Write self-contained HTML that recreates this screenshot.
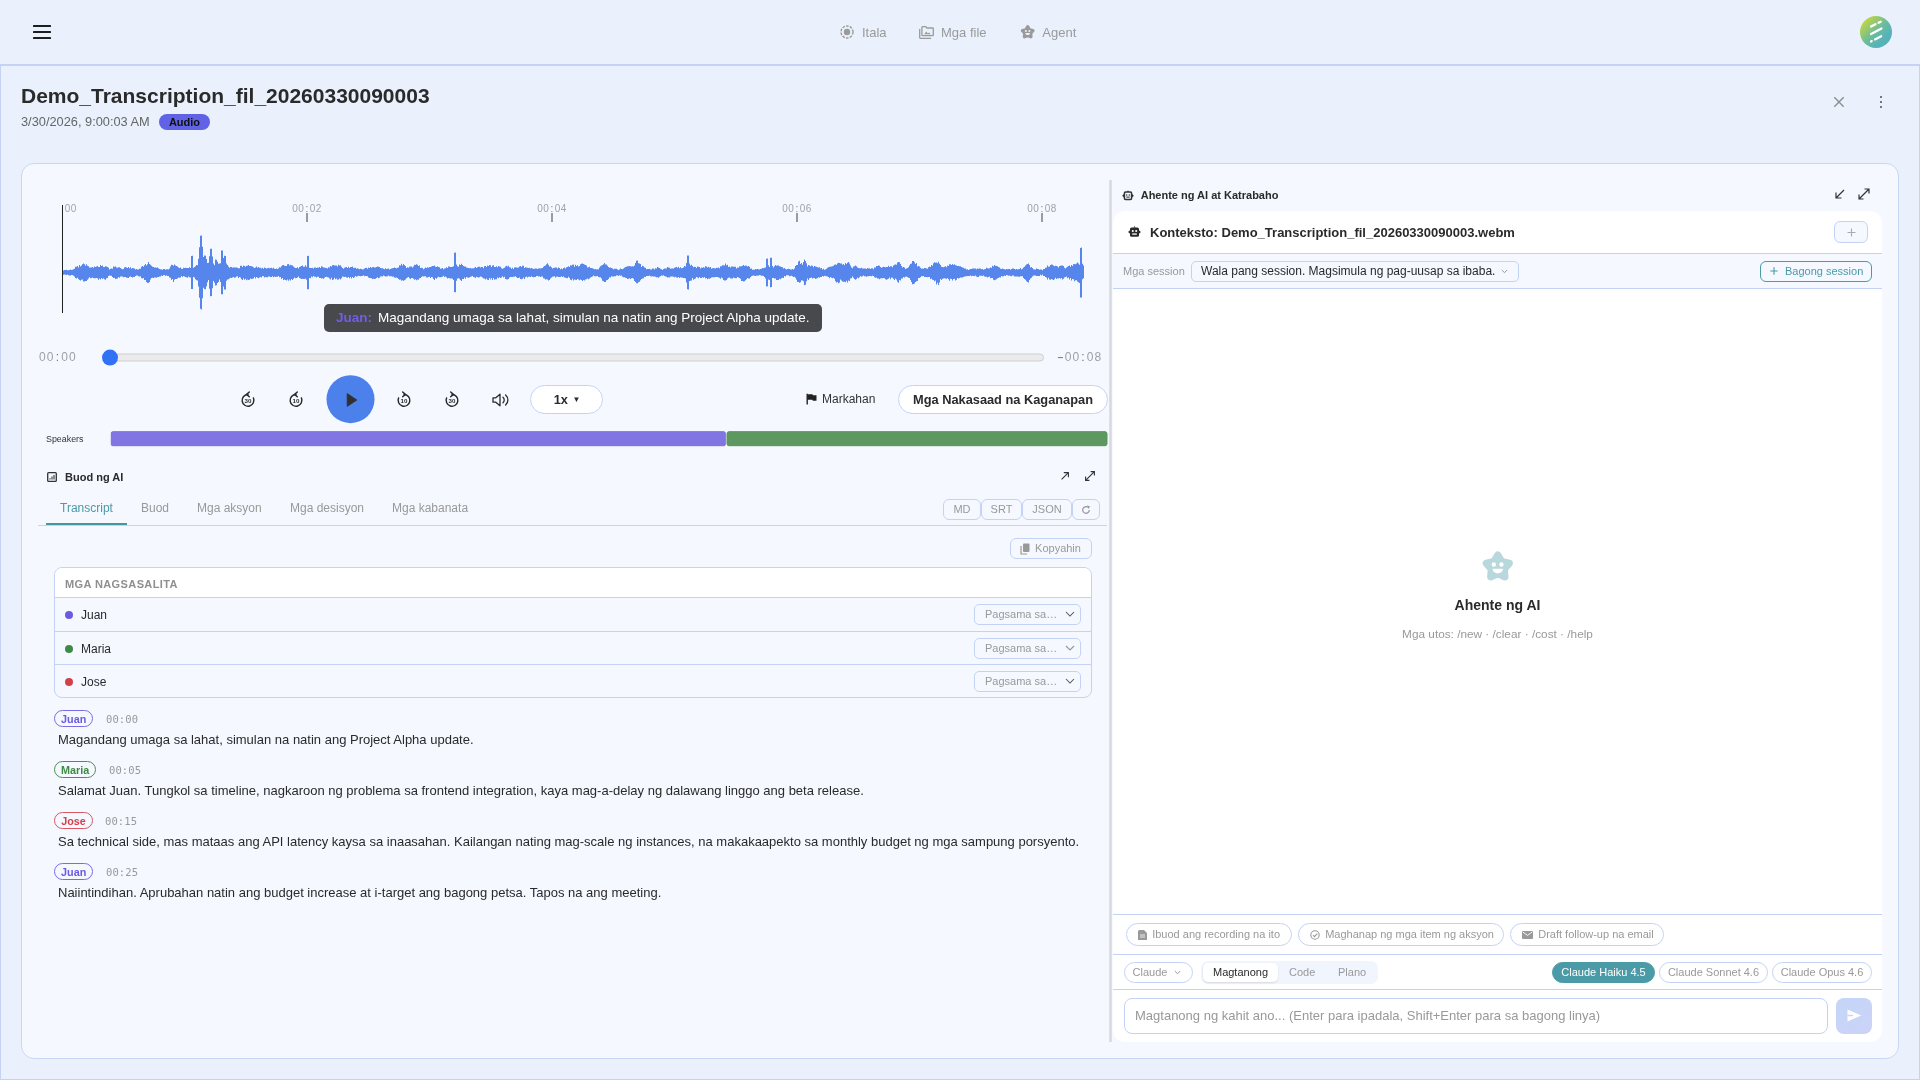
<!DOCTYPE html>
<html lang="fil">
<head>
<meta charset="utf-8">
<title>Demo_Transcription_fil_20260330090003</title>
<style>
*{box-sizing:border-box;margin:0;padding:0}
html,body{width:1920px;height:1080px;overflow:hidden}
body{background:#eaf1fd;font-family:"Liberation Sans",Arial,sans-serif;color:#2a2a2a;position:relative;font-size:13px}
.abs{position:absolute}
#root{position:absolute;left:0;top:0;width:1920px;height:1080px;will-change:transform}
svg{display:block}
/* top bar */
#topbar{position:absolute;left:0;top:0;width:1920px;height:66px;border-bottom:2px solid #c4d3f3;background:#eaf1fd}
#burger{position:absolute;left:33px;top:25px;width:18px;height:14px}
#burger i{position:absolute;left:0;width:18px;height:2px;background:#1e1e1e;border-radius:.5px}
.nav{position:absolute;top:22px;height:20px;display:flex;align-items:center;color:#9a9a9a;font-size:13px;white-space:nowrap}
.nav svg{margin-right:8px}
#avatar{position:absolute;left:1860px;top:16px;width:32px;height:32px;border-radius:50%;background:linear-gradient(135deg,#d8e024 4%,#a3cd60 26%,#6cbc9c 50%,#57b3b6 72%,#4fafc2 100%)}
/* page */
#page{position:absolute;left:0;top:66px;width:1920px;height:1014px;border:1px solid #c4d3f3;border-top:none;background:#eaf1fd}
#title{position:absolute;left:21px;top:82px;font-size:21px;font-weight:700;line-height:28px;color:#2a2a2a;white-space:nowrap}
#sub{position:absolute;left:21px;top:113px;font-size:12.8px;line-height:18px;color:#666;white-space:nowrap}
#badge{position:absolute;left:159px;top:114px;width:51px;height:16px;border-radius:8px;background:#6163e6;color:#111;font-size:11px;font-weight:700;line-height:16px;text-align:center}
/* card */
#card{position:absolute;left:21px;top:163px;width:1878px;height:896px;border:1px solid #c9d7f6;border-radius:13px;background:#f5f8ff}
#split{position:absolute;left:1109px;top:180px;width:3px;height:862px;background:linear-gradient(90deg,#e2e4ea,#d6d8de 50%,#e2e4ea)}
.mono{font-family:"Liberation Mono","DejaVu Sans Mono",monospace}
.tick{position:absolute;top:213px;width:2px;height:9px;background:#9a9aa0}
.tl{position:absolute;top:203px;width:60px;text-align:center;font-size:10px;line-height:12px;color:#a2a2a8;letter-spacing:.44px;white-space:nowrap}
.tl i{display:inline-block;width:5.56px;text-align:center;font-style:normal;color:#88888e}
#cursor{position:absolute;left:62px;top:205px;width:1px;height:108px;background:#222}
#caption{position:absolute;left:324px;top:304px;width:498px;height:28px;border-radius:5px;background:#47494c;color:#fff;font-size:13.500px;line-height:27px;padding-left:12px;white-space:nowrap}
#caption b{color:#6f5fe6;margin-right:6px}
.tm{position:absolute;top:350px;font-size:12px;line-height:14px;color:#a0a0a4;letter-spacing:1.080px;white-space:nowrap}
.tm i{display:inline-block;width:6.670px;text-align:center;font-style:normal;color:#77777c}
#track{position:absolute;left:103px;top:353px;width:941px;height:8px;transform:translateY(.5px);border:1px solid #cfcfcf;border-radius:4px;background:#ebebeb}
#thumb{position:absolute;left:102px;top:349px;width:16px;height:16px;border-radius:50%;background:#3172f4;transform:translateY(.6px)}
#play{position:absolute;left:326px;top:375px;width:48px;height:48px;border-radius:50%;background:#4c80ea;transform:translate(.5px,.2px)}
.ic{position:absolute}
.pill{position:absolute;top:385px;height:29px;border:1px solid #c4d3f5;border-radius:15px;background:#fff;font-weight:700;font-size:12.800px;line-height:27px;color:#2a2a2a;text-align:center;white-space:nowrap}
#mark{position:absolute;left:806px;top:391px;font-size:12px;line-height:16px;color:#333;white-space:nowrap;display:flex;align-items:center}
#spk-label{position:absolute;left:46px;top:433px;font-size:8.900px;line-height:13px;color:#333}
#spk1{position:absolute;left:111px;top:431px;width:615px;height:14.600px;background:#8075e3;border:1px solid #7a6ee1;border-radius:2px;transform:translate(-.2px,.2px)}
#spk2{position:absolute;left:726px;top:431px;width:381px;height:14.600px;background:#5e9861;border:1px solid #57935b;border-radius:2.500px;transform:translate(.5px,.2px)}
.h{position:absolute;font-weight:700;color:#2a2a2a;white-space:nowrap}
.tab{position:absolute;top:500px;font-size:12px;line-height:16px;color:#999;white-space:nowrap}
#tabline{position:absolute;left:38px;top:525px;width:1069px;height:1px;background:#c4d3f5}
#tabact{position:absolute;left:46px;top:523px;width:81px;height:2px;background:#46989f}
.sbtn{position:absolute;height:21px;border:1px solid #c4d3f5;border-radius:6px;background:#f5f8ff;color:#999;font-size:11px;line-height:19px;text-align:center;white-space:nowrap}
#spk-table{position:absolute;left:54px;top:567px;width:1038px;height:131px;border:1px solid #c4d3f5;border-radius:8px;overflow:hidden;background:#f5f8ff}
#spk-table .hd{height:30px;background:#fff;border-bottom:1px solid #c4d3f5;font-size:11px;font-weight:700;color:#8f8f8f;letter-spacing:.4px;line-height:32px;padding-left:10px}
#spk-table .row{height:33.5px;border-bottom:1px solid #c4d3f5;position:relative;font-size:12.5px;line-height:33px;color:#2a2a2a}
#spk-table .row:last-child{border-bottom:none}
.dot{position:absolute;left:10px;top:13px;width:8px;height:8px;border-radius:50%}
.nm{position:absolute;left:26px;top:1px;font-size:12px}
.sel{position:absolute;left:919px;top:6px;width:107px;height:21px;border:1px solid #c4d3f5;border-radius:5px;background:#f5f8ff;color:#999;font-size:11px;line-height:19px;padding-left:10px}
.sel svg{position:absolute;right:5px;top:6px}
.chip{position:absolute;left:54px;height:16.500px;border:1.200px solid;border-radius:9px;font-size:10.800px;font-weight:700;line-height:16.600px;text-align:center;margin-top:-.6px}
.ts{position:absolute;font-family:"DejaVu Sans Mono","Liberation Mono",monospace;font-size:10.5px;line-height:14px;color:#999;letter-spacing:0.1px}
.tx{position:absolute;left:58px;font-size:13px;line-height:16px;color:#2a2a2a;white-space:nowrap}
/* right */
#agent{position:absolute;left:1113px;top:211px;width:769px;height:831px;border-radius:12px;background:#fff;overflow:hidden}
.hl{position:absolute;left:0;width:769px;height:1px;background:#c4d3f5}
.rc{position:absolute;height:23px;border:1px solid #c4d3f5;border-radius:12px;background:#fff;color:#999;font-size:11px;line-height:21px;white-space:nowrap;display:flex;align-items:center;padding-left:11.200px}
.rc svg{margin-right:5px}
.mp{position:absolute;top:751px;height:21px;border:1px solid #c4d3f5;border-radius:11px;background:#fff;color:#999;font-size:11px;line-height:19px;text-align:center;white-space:nowrap}
</style>
</head>
<body>
<div id="root">
<div id="topbar">
  <div id="burger"><i style="top:0"></i><i style="top:6px"></i><i style="top:12px"></i></div>
  <div class="nav" style="left:840px">
    <svg width="14" height="14" viewBox="0 0 14 14"><circle cx="7" cy="7" r="6" fill="none" stroke="#9a9a9a" stroke-width="1.4" stroke-dasharray="2.6 1.2"/><circle cx="7" cy="7" r="3.2" fill="#9a9a9a"/></svg>Itala</div>
  <div class="nav" style="left:919px">
    <svg width="15" height="13" viewBox="0 0 15 13" style="margin-right:7px"><path d="M3.600 .7h3.200l1.100 1.300h5.700a.7.7 0 0 1 .7.7v6.200a.7.7 0 0 1-.7.7h-10a.7.7 0 0 1-.7-.7v-7.500a.7.7 0 0 1 .7-.7z" fill="none" stroke="#9a9a9a" stroke-width="1.300" stroke-linejoin="round"/><path d="M.7 3.400v8.200a.7.7 0 0 0 .7.7h10.200" fill="none" stroke="#9a9a9a" stroke-width="1.300" stroke-linecap="round"/><path d="M5.300 8.300l2-2.700 1.500 1.900 1.100-1.100 2 1.900z" fill="#9a9a9a"/></svg>Mga file</div>
  <div class="nav" style="left:1021px">
    <svg style="position:absolute;left:-.6px;top:2.400px" width="15.400" height="15.400" viewBox="0 0 24 24"><path d="M12.00 4.30L14.82 9.02L20.18 10.24L16.57 14.38L17.05 19.86L12.00 17.70L6.95 19.86L7.43 14.38L3.82 10.24L9.18 9.02Z" fill="#9a9a9a" stroke="#9a9a9a" stroke-width="5.200" stroke-linejoin="round"/><circle cx="9.150" cy="11.100" r="1.550" fill="#eaf1fd"/><circle cx="14.600" cy="11.100" r="1.550" fill="#eaf1fd"/><path d="M8.300 14.050h7.400c0 2-1.700 3.200-3.700 3.200s-3.700-1.200-3.700-3.200z" fill="#eaf1fd"/></svg><span style="margin-left:21.300px">Agent</span></div>
  <div id="avatar"><svg width="32" height="32" viewBox="0 0 32 32"><g stroke="#fff" stroke-width="2.200" stroke-linecap="round"><path d="M11 10.500l4.500-2.300"/><path d="M18.500 6.800l2.200-1.100"/><path d="M11 18l10.500-5.500"/><path d="M11 25.500l.8-.4"/><path d="M15 23.400l6.200-3.200"/></g></svg></div>
</div>
<div id="page"></div>
<div id="title">Demo_Transcription_fil_20260330090003</div>
<div id="sub">3/30/2026, 9:00:03 AM</div>
<div id="badge">Audio</div>
<svg class="abs" style="left:1833px;top:96px" width="12" height="12" viewBox="0 0 12 12"><path d="M1.300 1.300l9.400 9.400M10.700 1.300l-9.400 9.400" stroke="#8d8d8d" stroke-width="1.400" fill="none"/></svg>
<svg class="abs" style="left:1879px;top:95px" width="4" height="14" viewBox="0 0 4 14"><circle cx="2" cy="2" r=".95" fill="#444"/><circle cx="2" cy="7" r=".95" fill="#444"/><circle cx="2" cy="12" r=".95" fill="#444"/></svg>

<div id="card"></div>
<div id="split"></div>

<!-- waveform -->
<div class="tl" style="left:32px;width:60px;clip-path:inset(0 0 0 31px)">00<i>:</i>00</div>
<div class="tl" style="left:277px">00<i>:</i>02</div>
<div class="tl" style="left:522px">00<i>:</i>04</div>
<div class="tl" style="left:767px">00<i>:</i>06</div>
<div class="tl" style="left:1012px">00<i>:</i>08</div>
<div class="tick" style="left:306px"></div><div class="tick" style="left:551px"></div><div class="tick" style="left:796px"></div><div class="tick" style="left:1041px"></div>
<svg class="abs" style="left:62px;top:225px" width="1022" height="95" viewBox="0 0 1022 95"><path fill="#5686eb" d="M0,44.9H1V45.5H2V45.0H3V44.9H4V44.7H5V45.3H6V45.3H7V44.9H8V44.4H9V44.9H10V44.7H11V44.3H12V43.7H13V41.8H14V41.8H15V41.0H16V42.4H17V40.0H18V41.5H19V40.6H20V39.2H21V38.4H22V39.2H23V40.7H24V39.3H25V40.8H26V41.3H27V42.4H28V42.6H29V42.4H30V41.9H31V42.8H32V41.6H33V42.1H34V41.5H35V40.9H36V42.1H37V42.0H38V40.0H39V41.0H40V40.5H41V41.9H42V42.1H43V41.2H44V41.4H45V41.9H46V42.8H47V44.6H48V43.8H49V43.4H50V43.8H51V41.5H52V41.7H53V41.6H54V42.6H55V42.8H56V42.2H57V42.2H58V43.0H59V43.8H60V44.2H61V44.1H62V42.5H63V42.1H64V42.4H65V42.9H66V42.0H67V43.2H68V42.3H69V43.8H70V43.1H71V43.2H72V43.6H73V44.6H74V44.1H75V44.4H76V44.4H77V43.7H78V43.8H79V41.7H80V40.9H81V41.8H82V40.3H83V38.9H84V40.5H85V39.3H86V36.9H87V39.1H88V39.7H89V40.8H90V41.7H91V42.0H92V42.5H93V42.4H94V42.8H95V42.5H96V43.3H97V44.0H98V44.3H99V44.4H100V44.7H101V44.0H102V44.0H103V44.8H104V44.2H105V44.2H106V44.5H107V43.5H108V41.6H109V39.8H110V40.1H111V40.7H112V39.4H113V40.6H114V41.0H115V41.6H116V42.6H117V42.9H118V42.6H119V43.8H120V44.1H121V42.7H122V43.0H123V42.7H124V42.9H125V42.9H126V43.1H127V42.3H128V43.1H129V30.9H130V30.7H131V43.1H132V42.1H133V41.3H134V40.0H135V40.2H136V33.8H137V22.2H138V10.7H139V10.6H140V21.7H141V32.1H142V30.6H143V30.8H144V33.9H145V37.9H146V37.7H147V31.2H148V23.7H149V23.8H150V31.5H151V38.6H152V40.3H153V34.6H154V34.8H155V36.7H156V38.7H157V38.5H158V38.2H159V25.5H160V25.5H161V33.1H162V30.7H163V31.0H164V38.5H165V39.9H166V41.6H167V42.8H168V42.0H169V42.0H170V42.7H171V42.2H172V42.5H173V42.6H174V42.5H175V42.8H176V43.2H177V43.2H178V40.7H179V40.7H180V41.9H181V40.5H182V40.9H183V41.8H184V40.7H185V40.8H186V40.1H187V40.9H188V41.0H189V41.2H190V41.6H191V42.2H192V43.0H193V42.4H194V41.4H195V42.7H196V41.9H197V42.8H198V42.8H199V43.4H200V42.7H201V43.8H202V42.6H203V42.9H204V43.4H205V43.3H206V42.8H207V43.3H208V43.0H209V42.7H210V43.5H211V42.7H212V43.8H213V43.9H214V43.4H215V44.0H216V43.4H217V42.3H218V42.5H219V41.2H220V40.3H221V40.0H222V40.7H223V40.9H224V41.1H225V39.3H226V39.0H227V40.6H228V39.7H229V40.2H230V40.5H231V41.6H232V42.5H233V42.9H234V43.0H235V42.3H236V43.5H237V41.9H238V41.6H239V41.1H240V40.4H241V41.7H242V41.8H243V40.2H244V41.8H245V31.0H246V30.7H247V42.8H248V43.0H249V43.1H250V42.8H251V43.6H252V42.5H253V42.4H254V43.1H255V42.4H256V42.7H257V42.0H258V42.9H259V41.3H260V41.8H261V42.5H262V42.6H263V43.0H264V43.1H265V43.4H266V42.3H267V42.5H268V41.1H269V41.5H270V40.3H271V40.0H272V40.5H273V40.5H274V40.5H275V41.6H276V39.8H277V40.6H278V40.3H279V41.8H280V42.9H281V43.7H282V42.8H283V42.3H284V42.1H285V42.9H286V41.8H287V43.0H288V42.1H289V42.0H290V41.5H291V42.9H292V42.7H293V42.8H294V43.7H295V43.3H296V43.7H297V44.3H298V43.8H299V43.9H300V44.6H301V44.2H302V43.5H303V43.1H304V42.8H305V43.8H306V42.4H307V42.9H308V41.9H309V42.7H310V42.3H311V42.1H312V42.6H313V42.5H314V41.9H315V41.4H316V41.7H317V41.9H318V43.0H319V43.3H320V43.3H321V43.7H322V44.2H323V43.3H324V44.0H325V43.8H326V43.4H327V44.4H328V44.1H329V43.6H330V43.2H331V43.0H332V42.5H333V43.0H334V43.3H335V42.7H336V42.5H337V40.2H338V40.5H339V38.8H340V40.5H341V39.0H342V39.9H343V41.1H344V42.9H345V42.3H346V42.8H347V41.8H348V41.6H349V41.4H350V42.6H351V41.4H352V39.8H353V40.0H354V39.3H355V39.7H356V41.0H357V40.4H358V43.0H359V42.7H360V43.0H361V44.3H362V43.6H363V42.5H364V43.0H365V42.3H366V42.8H367V42.0H368V41.9H369V41.5H370V41.1H371V41.0H372V40.6H373V41.8H374V41.9H375V41.2H376V42.0H377V42.3H378V43.7H379V43.5H380V43.1H381V44.3H382V43.5H383V43.2H384V42.3H385V42.9H386V41.6H387V41.4H388V42.1H389V42.0H390V41.7H391V41.2H392V27.7H393V27.5H394V39.5H395V41.3H396V41.7H397V39.6H398V40.0H399V38.8H400V40.0H401V41.0H402V41.5H403V41.6H404V42.6H405V42.8H406V43.1H407V43.2H408V43.0H409V43.6H410V43.2H411V43.4H412V42.7H413V42.1H414V43.0H415V42.2H416V41.7H417V41.8H418V42.6H419V42.1H420V42.0H421V43.2H422V41.3H423V40.9H424V41.9H425V40.4H426V41.0H427V39.9H428V40.2H429V41.9H430V40.6H431V40.3H432V42.0H433V42.0H434V41.2H435V42.3H436V41.0H437V41.4H438V41.8H439V43.3H440V43.8H441V43.3H442V42.7H443V41.6H444V40.7H445V41.6H446V40.8H447V42.3H448V42.4H449V43.7H450V42.8H451V43.9H452V42.6H453V42.3H454V42.6H455V42.7H456V42.6H457V41.5H458V40.9H459V41.9H460V40.7H461V40.8H462V43.0H463V42.2H464V42.4H465V42.8H466V43.0H467V42.8H468V43.6H469V43.1H470V43.4H471V44.0H472V43.8H473V43.6H474V43.5H475V44.1H476V43.4H477V43.3H478V43.5H479V43.3H480V42.9H481V41.8H482V40.9H483V40.5H484V39.2H485V38.2H486V39.7H487V41.5H488V41.2H489V42.2H490V43.5H491V43.0H492V42.7H493V42.6H494V42.4H495V43.5H496V42.6H497V43.1H498V44.2H499V43.4H500V44.2H501V43.0H502V42.4H503V43.5H504V42.3H505V42.1H506V41.3H507V42.1H508V40.3H509V40.4H510V39.8H511V39.6H512V41.7H513V39.7H514V41.1H515V40.2H516V41.4H517V41.1H518V39.2H519V38.8H520V38.6H521V39.1H522V39.5H523V40.0H524V40.4H525V42.4H526V42.3H527V41.8H528V43.1H529V43.1H530V43.3H531V43.7H532V44.3H533V43.9H534V44.6H535V44.2H536V44.2H537V42.6H538V41.3H539V40.5H540V40.1H541V39.2H542V37.9H543V39.4H544V39.5H545V40.8H546V42.0H547V42.8H548V42.4H549V43.1H550V43.5H551V44.3H552V43.7H553V43.8H554V43.8H555V44.4H556V44.9H557V44.4H558V43.6H559V44.1H560V44.2H561V43.5H562V42.8H563V41.9H564V41.7H565V41.2H566V41.2H567V40.9H568V41.2H569V41.6H570V41.2H571V41.5H572V40.4H573V38.1H574V35.8H575V35.6H576V38.2H577V38.5H578V39.1H579V41.9H580V40.8H581V41.2H582V42.5H583V42.7H584V44.2H585V44.0H586V43.9H587V43.7H588V44.5H589V44.5H590V43.5H591V43.6H592V44.6H593V43.3H594V43.5H595V42.0H596V42.4H597V43.1H598V43.7H599V44.2H600V45.0H601V44.0H602V43.5H603V43.4H604V43.6H605V41.9H606V42.5H607V42.7H608V43.8H609V43.4H610V43.6H611V43.6H612V42.8H613V42.3H614V41.9H615V42.8H616V41.8H617V43.3H618V42.3H619V43.3H620V43.0H621V42.6H622V41.1H623V41.6H624V38.1H625V30.6H626V30.6H627V38.5H628V40.4H629V39.7H630V40.9H631V42.2H632V41.7H633V41.9H634V43.0H635V41.5H636V41.7H637V42.1H638V43.6H639V42.4H640V42.8H641V42.3H642V42.8H643V41.3H644V41.5H645V42.4H646V41.8H647V42.5H648V41.9H649V43.8H650V43.2H651V43.0H652V43.3H653V43.4H654V42.8H655V43.0H656V42.5H657V43.3H658V41.2H659V41.2H660V40.2H661V40.3H662V40.6H663V38.5H664V40.2H665V39.7H666V41.9H667V41.5H668V42.5H669V41.4H670V41.4H671V41.7H672V41.8H673V41.7H674V43.4H675V42.5H676V42.7H677V41.2H678V41.5H679V41.3H680V40.8H681V39.9H682V40.9H683V40.5H684V40.7H685V41.6H686V41.0H687V41.7H688V43.8H689V43.6H690V44.8H691V44.8H692V44.7H693V44.0H694V44.2H695V44.0H696V44.3H697V44.5H698V44.0H699V43.7H700V43.1H701V43.2H702V42.8H703V42.4H704V33.8H705V33.5H706V40.3H707V42.1H708V32.7H709V32.7H710V41.1H711V42.6H712V41.3H713V40.0H714V40.7H715V40.6H716V40.4H717V41.3H718V41.5H719V42.0H720V42.2H721V43.4H722V43.0H723V44.1H724V44.4H725V44.1H726V43.8H727V44.0H728V44.4H729V44.4H730V44.1H731V44.4H732V43.6H733V41.1H734V40.1H735V40.1H736V36.6H737V35.8H738V39.0H739V38.1H740V39.7H741V37.0H742V34.6H743V36.0H744V38.2H745V41.5H746V39.9H747V40.5H748V41.2H749V40.4H750V40.7H751V42.3H752V41.0H753V41.6H754V41.7H755V42.3H756V42.5H757V42.3H758V43.5H759V43.1H760V44.5H761V43.7H762V44.8H763V44.6H764V43.7H765V42.7H766V42.2H767V41.7H768V41.8H769V41.4H770V41.2H771V40.8H772V39.7H773V39.5H774V39.7H775V38.6H776V37.7H777V38.0H778V38.4H779V38.4H780V39.7H781V38.9H782V40.3H783V38.0H784V39.1H785V37.8H786V36.9H787V38.5H788V40.6H789V42.4H790V43.3H791V41.4H792V41.2H793V40.6H794V41.2H795V42.5H796V43.1H797V43.2H798V43.3H799V42.8H800V43.4H801V43.5H802V43.6H803V43.5H804V44.0H805V43.1H806V43.6H807V43.2H808V44.0H809V43.3H810V43.3H811V44.2H812V42.4H813V42.4H814V41.1H815V41.0H816V40.6H817V40.8H818V41.9H819V42.8H820V42.2H821V41.8H822V41.9H823V42.2H824V41.9H825V42.1H826V40.7H827V42.1H828V41.3H829V41.2H830V42.3H831V40.6H832V39.8H833V39.5H834V39.7H835V37.5H836V36.9H837V37.3H838V39.0H839V40.9H840V42.5H841V42.1H842V42.6H843V43.9H844V43.4H845V42.9H846V42.2H847V40.6H848V38.9H849V38.5H850V35.9H851V36.1H852V37.3H853V39.1H854V38.0H855V41.4H856V41.0H857V41.6H858V42.8H859V43.7H860V43.5H861V43.7H862V43.0H863V42.9H864V43.6H865V43.7H866V42.3H867V41.4H868V42.1H869V40.1H870V40.7H871V38.2H872V37.3H873V37.8H874V37.4H875V38.2H876V36.8H877V38.8H878V39.9H879V41.8H880V42.1H881V42.3H882V41.7H883V41.3H884V42.2H885V40.4H886V41.0H887V39.3H888V39.3H889V39.9H890V39.0H891V39.9H892V39.2H893V40.2H894V40.4H895V41.1H896V40.9H897V41.2H898V41.3H899V41.9H900V42.4H901V42.8H902V43.6H903V43.6H904V44.5H905V44.2H906V44.9H907V44.5H908V43.9H909V44.1H910V43.4H911V43.6H912V43.6H913V43.6H914V44.2H915V43.4H916V43.8H917V43.4H918V43.5H919V44.3H920V44.1H921V44.8H922V44.3H923V44.0H924V42.8H925V43.3H926V43.4H927V43.3H928V42.4H929V42.7H930V40.7H931V41.4H932V40.0H933V40.8H934V40.9H935V41.3H936V42.0H937V42.4H938V43.7H939V43.9H940V43.6H941V44.0H942V44.2H943V44.6H944V44.0H945V44.3H946V44.1H947V44.1H948V44.7H949V44.0H950V43.5H951V43.4H952V44.1H953V44.5H954V43.9H955V44.6H956V44.3H957V43.9H958V43.1H959V44.4H960V43.8H961V42.5H962V41.7H963V40.6H964V39.4H965V39.0H966V38.5H967V39.9H968V42.6H969V42.0H970V43.0H971V44.3H972V44.4H973V44.4H974V43.5H975V43.9H976V44.1H977V44.8H978V44.6H979V44.6H980V45.2H981V44.0H982V44.1H983V42.8H984V42.4H985V40.5H986V41.7H987V41.6H988V40.1H989V39.4H990V39.7H991V40.5H992V41.3H993V40.7H994V41.0H995V41.4H996V42.4H997V41.0H998V40.8H999V40.5H1000V40.5H1001V41.1H1002V42.7H1003V43.5H1004V42.4H1005V41.7H1006V41.1H1007V40.4H1008V41.7H1009V39.9H1010V40.9H1011V39.3H1012V39.0H1013V39.2H1014V38.5H1015V37.4H1016V38.4H1017V39.7H1018V23.1H1019V22.5H1020V38.8H1021V40.5H1022V53.3H1021V54.2H1020V72.4H1019V72.4H1018V57.9H1017V57.2H1016V56.5H1015V55.2H1014V55.3H1013V56.2H1012V54.3H1011V54.1H1010V55.5H1009V53.0H1008V54.6H1007V52.4H1006V53.3H1005V51.6H1004V52.0H1003V52.4H1002V53.8H1001V54.5H1000V53.0H999V53.7H998V53.1H997V53.6H996V53.3H995V54.0H994V52.8H993V54.3H992V54.9H991V54.5H990V53.9H989V54.8H988V54.5H987V52.7H986V54.4H985V52.4H984V52.1H983V51.1H982V51.0H981V49.6H980V50.4H979V49.8H978V51.1H977V50.9H976V51.0H975V51.1H974V50.5H973V50.6H972V50.6H971V51.4H970V52.8H969V53.5H968V54.9H967V57.5H966V57.0H965V56.3H964V54.8H963V53.9H962V53.0H961V51.3H960V51.2H959V51.3H958V51.8H957V51.8H956V51.5H955V51.5H954V51.5H953V51.5H952V50.5H951V50.5H950V51.3H949V51.0H948V50.5H947V50.7H946V50.2H945V50.1H944V51.0H943V50.4H942V51.3H941V51.5H940V51.1H939V52.4H938V52.2H937V53.0H936V53.2H935V54.2H934V54.8H933V55.3H932V54.7H931V52.9H930V53.0H929V53.3H928V51.6H927V52.0H926V52.4H925V51.7H924V51.8H923V51.5H922V50.5H921V51.0H920V50.8H919V50.8H918V50.8H917V52.0H916V52.0H915V51.6H914V50.6H913V51.2H912V50.9H911V50.7H910V51.3H909V50.5H908V51.0H907V51.0H906V50.9H905V51.2H904V51.2H903V51.5H902V52.0H901V52.4H900V52.5H899V52.6H898V52.9H897V53.6H896V53.1H895V54.7H894V55.5H893V53.8H892V54.1H891V55.6H890V53.9H889V53.7H888V55.7H887V54.3H886V53.0H885V54.0H884V53.4H883V53.3H882V53.6H881V53.7H880V55.1H879V53.9H878V57.4H877V59.9H876V57.7H875V59.4H874V55.6H873V56.2H872V55.0H871V54.7H870V53.6H869V54.1H868V51.9H867V52.0H866V52.2H865V52.0H864V52.1H863V52.0H862V51.0H861V51.3H860V51.3H859V52.3H858V52.9H857V52.9H856V56.0H855V56.2H854V56.9H853V58.5H852V59.1H851V59.3H850V57.0H849V55.1H848V52.9H847V52.8H846V52.3H845V51.5H844V51.8H843V52.5H842V52.0H841V53.5H840V53.4H839V55.6H838V55.1H837V57.7H836V56.7H835V54.5H834V53.5H833V55.1H832V53.7H831V52.8H830V52.5H829V54.3H828V52.6H827V53.8H826V54.2H825V54.7H824V54.3H823V53.3H822V52.9H821V53.2H820V53.2H819V53.5H818V54.2H817V53.6H816V53.6H815V52.6H814V52.7H813V52.3H812V50.9H811V50.7H810V51.3H809V50.9H808V51.0H807V51.2H806V51.3H805V51.8H804V51.2H803V51.2H802V50.4H801V51.2H800V51.8H799V51.1H798V52.2H797V53.3H796V52.5H795V54.0H794V54.7H793V54.1H792V52.7H791V51.6H790V53.2H789V53.6H788V56.0H787V55.5H786V57.4H785V55.8H784V57.2H783V56.8H782V56.7H781V56.5H780V55.4H779V54.6H778V57.4H777V58.2H776V56.9H775V57.4H774V56.2H773V53.8H772V52.8H771V53.2H770V52.8H769V52.1H768V53.2H767V52.0H766V51.6H765V51.2H764V50.9H763V50.7H762V51.4H761V51.1H760V51.9H759V51.9H758V52.8H757V52.3H756V53.3H755V53.4H754V53.9H753V53.1H752V53.1H751V53.5H750V52.6H749V53.0H748V53.2H747V55.0H746V53.6H745V56.3H744V59.7H743V60.2H742V56.3H741V55.6H740V55.2H739V57.2H738V57.8H737V57.1H736V56.9H735V54.7H734V52.7H733V51.8H732V51.9H731V51.3H730V50.8H729V50.9H728V51.3H727V50.2H726V50.3H725V50.2H724V51.5H723V51.0H722V53.0H721V52.8H720V53.3H719V54.3H718V53.8H717V54.9H716V55.1H715V55.0H714V53.4H713V53.6H712V52.9H711V53.1H710V62.1H709V62.2H708V55.0H707V54.4H706V61.2H705V61.4H704V53.6H703V51.9H702V50.9H701V50.7H700V50.8H699V50.2H698V50.0H697V50.7H696V50.6H695V50.7H694V50.9H693V50.8H692V50.5H691V50.8H690V51.2H689V52.3H688V53.4H687V53.4H686V53.0H685V54.3H684V55.3H683V56.3H682V56.4H681V56.1H680V56.1H679V53.7H678V52.9H677V52.4H676V51.9H675V53.2H674V53.2H673V52.9H672V52.5H671V53.6H670V53.5H669V53.5H668V52.6H667V52.7H666V53.4H665V54.9H664V55.4H663V55.6H662V54.9H661V53.2H660V52.4H659V53.7H658V52.8H657V52.5H656V52.1H655V51.9H654V52.1H653V52.2H652V52.2H651V52.2H650V52.4H649V53.2H648V53.8H647V53.6H646V54.2H645V53.1H644V53.6H643V52.1H642V52.8H641V52.3H640V52.9H639V52.9H638V52.1H637V53.3H636V52.4H635V51.9H634V53.6H633V54.0H632V54.8H631V53.1H630V55.5H629V55.8H628V56.0H627V64.4H626V64.3H625V57.4H624V53.4H623V52.9H622V53.1H621V52.8H620V52.5H619V52.3H618V53.1H617V51.9H616V52.8H615V52.6H614V51.8H613V52.2H612V51.8H611V51.6H610V51.6H609V51.6H608V52.4H607V52.3H606V52.4H605V51.7H604V51.6H603V51.0H602V50.3H601V50.8H600V50.4H599V51.2H598V51.7H597V52.8H596V52.3H595V52.2H594V51.7H593V51.5H592V51.4H591V51.2H590V51.5H589V51.2H588V50.6H587V51.1H586V51.0H585V51.1H584V52.0H583V51.7H582V53.3H581V53.4H580V54.1H579V55.3H578V56.7H577V57.2H576V58.2H575V58.3H574V57.0H573V56.1H572V53.8H571V53.1H570V53.3H569V54.0H568V53.2H567V53.7H566V54.0H565V53.0H564V52.8H563V52.3H562V52.2H561V51.7H560V50.5H559V50.8H558V50.3H557V50.9H556V50.3H555V50.6H554V51.3H553V51.3H552V51.5H551V51.5H550V51.3H549V52.5H548V52.3H547V53.9H546V55.0H545V55.3H544V56.9H543V56.9H542V56.2H541V55.8H540V53.4H539V52.2H538V52.3H537V52.0H536V50.9H535V51.2H534V51.3H533V51.2H532V50.5H531V51.6H530V52.1H529V52.5H528V53.6H527V54.2H526V53.6H525V54.3H524V54.5H523V55.4H522V55.1H521V56.1H520V54.9H519V54.4H518V55.2H517V54.5H516V53.9H515V55.1H514V54.8H513V54.5H512V55.5H511V53.7H510V55.3H509V54.7H508V53.0H507V51.8H506V53.3H505V52.9H504V52.8H503V52.5H502V51.5H501V52.1H500V51.2H499V52.1H498V52.1H497V52.1H496V51.6H495V51.8H494V52.4H493V51.3H492V51.6H491V51.7H490V52.5H489V53.6H488V54.9H487V55.4H486V54.4H485V54.3H484V54.5H483V53.5H482V53.2H481V51.5H480V51.5H479V52.0H478V51.2H477V51.4H476V50.9H475V51.0H474V51.9H473V52.1H472V52.3H471V51.9H470V51.3H469V51.9H468V51.7H467V51.8H466V52.6H465V51.5H464V52.2H463V53.9H462V52.6H461V53.7H460V54.3H459V53.9H458V52.4H457V52.9H456V52.9H455V52.2H454V51.2H453V51.8H452V51.7H451V52.1H450V51.9H449V52.1H448V52.4H447V54.1H446V54.5H445V54.2H444V53.9H443V51.7H442V52.6H441V51.2H440V52.4H439V53.1H438V52.2H437V53.2H436V52.4H435V54.3H434V54.2H433V54.7H432V53.0H431V54.9H430V53.0H429V54.4H428V53.1H427V55.0H426V54.7H425V53.4H424V54.5H423V53.6H422V53.4H421V52.4H420V51.8H419V51.6H418V52.3H417V52.4H416V52.3H415V51.8H414V53.1H413V52.2H412V51.9H411V51.1H410V51.6H409V51.7H408V52.5H407V52.7H406V52.5H405V52.0H404V53.8H403V52.4H402V54.1H401V53.9H400V56.1H399V54.9H398V53.7H397V53.3H396V53.5H395V55.7H394V67.3H393V67.0H392V54.9H391V53.8H390V53.5H389V53.6H388V53.2H387V53.0H386V53.4H385V52.3H384V51.6H383V52.0H382V50.8H381V51.8H380V52.0H379V52.3H378V52.2H377V51.8H376V52.5H375V53.7H374V52.9H373V55.1H372V53.9H371V52.3H370V51.9H369V52.9H368V51.7H367V52.0H366V52.6H365V52.6H364V51.2H363V51.2H362V51.6H361V51.2H360V52.1H359V52.9H358V53.3H357V54.7H356V54.4H355V55.2H354V54.2H353V54.7H352V53.8H351V52.9H350V52.9H349V53.9H348V53.3H347V52.1H346V52.4H345V53.2H344V54.4H343V55.2H342V55.8H341V55.3H340V55.7H339V54.4H338V54.8H337V53.9H336V53.1H335V52.5H334V52.7H333V52.6H332V51.6H331V51.8H330V51.2H329V51.3H328V51.3H327V50.4H326V51.3H325V51.6H324V51.4H323V51.0H322V50.5H321V51.4H320V51.2H319V51.6H318V52.8H317V53.3H316V52.3H315V53.1H314V53.8H313V54.1H312V53.7H311V54.0H310V53.3H309V53.1H308V53.1H307V52.4H306V51.2H305V51.1H304V51.0H303V51.2H302V50.3H301V50.9H300V51.1H299V51.2H298V50.9H297V50.7H296V51.3H295V51.8H294V50.9H293V52.3H292V52.9H291V51.9H290V53.4H289V51.9H288V53.2H287V51.9H286V52.8H285V52.5H284V51.8H283V52.1H282V51.8H281V51.4H280V53.2H279V54.6H278V53.4H277V54.6H276V54.7H275V53.5H274V54.2H273V52.7H272V54.5H271V55.1H270V52.8H269V54.4H268V53.4H267V52.4H266V52.3H265V51.8H264V52.1H263V52.8H262V53.7H261V53.2H260V53.6H259V52.9H258V53.0H257V51.8H256V51.7H255V52.6H254V51.7H253V51.8H252V51.1H251V52.2H250V51.5H249V53.2H248V53.1H247V64.3H246V64.3H245V54.7H244V53.5H243V54.0H242V54.0H241V53.8H240V53.9H239V53.4H238V53.0H237V51.6H236V52.5H235V52.9H234V53.2H233V52.4H232V53.8H231V54.9H230V53.9H229V55.6H228V54.5H227V55.7H226V54.6H225V55.6H224V55.0H223V54.5H222V55.0H221V53.0H220V53.9H219V52.1H218V52.3H217V50.9H216V51.7H215V51.8H214V51.9H213V51.5H212V52.3H211V51.3H210V52.1H209V51.9H208V51.6H207V51.5H206V52.2H205V52.2H204V51.9H203V52.4H202V51.2H201V51.0H200V52.5H199V52.1H198V52.5H197V53.2H196V52.7H195V52.1H194V53.5H193V52.1H192V53.4H191V53.7H190V54.1H189V53.5H188V54.8H187V55.1H186V54.6H185V55.3H184V53.8H183V54.8H182V53.3H181V55.0H180V54.2H179V52.5H178V51.9H177V52.9H176V51.3H175V51.6H174V52.6H173V52.8H172V52.0H171V52.5H170V53.1H169V52.8H168V53.5H167V54.3H166V54.4H165V55.8H164V64.5H163V64.4H162V61.6H161V69.3H160V69.2H159V57.0H158V54.5H157V56.9H156V58.1H155V60.3H154V60.4H153V57.7H152V56.1H151V63.3H150V71.1H149V71.2H148V63.7H147V54.9H146V57.2H145V61.2H144V64.2H143V64.0H142V62.7H141V73.3H140V84.4H139V83.8H138V72.8H137V61.5H136V55.6H135V55.2H134V54.3H133V52.5H132V52.1H131V64.0H130V64.1H129V52.6H128V52.3H127V51.6H126V52.8H125V52.3H124V52.1H123V51.4H122V51.0H121V52.1H120V50.9H119V52.4H118V52.7H117V52.4H116V53.4H115V54.1H114V54.0H113V54.8H112V56.9H111V54.1H110V55.0H109V52.8H108V52.5H107V51.1H106V50.9H105V50.3H104V51.0H103V50.1H102V50.2H101V51.1H100V50.5H99V51.5H98V51.4H97V51.9H96V51.9H95V52.7H94V52.5H93V52.6H92V53.1H91V52.8H90V53.0H89V54.6H88V57.1H87V58.0H86V57.8H85V56.9H84V55.0H83V55.1H82V52.9H81V53.6H80V53.0H79V51.3H78V51.5H77V51.2H76V50.6H75V50.4H74V51.1H73V52.0H72V51.9H71V52.4H70V52.1H69V51.6H68V51.7H67V52.9H66V52.8H65V52.8H64V52.1H63V52.0H62V52.2H61V51.6H60V51.5H59V51.6H58V52.8H57V52.0H56V53.4H55V53.8H54V54.0H53V52.8H52V53.0H51V52.1H50V50.7H49V50.8H48V50.4H47V51.1H46V52.9H45V53.3H44V54.7H43V54.2H42V53.3H41V54.0H40V53.1H39V54.4H38V53.6H37V54.8H36V53.2H35V53.1H34V53.3H33V53.3H32V53.1H31V52.5H30V53.0H29V53.2H28V52.2H27V53.6H26V54.7H25V55.9H24V56.0H23V56.6H22V56.5H21V54.4H20V54.8H19V55.4H18V55.1H17V54.0H16V52.8H15V53.5H14V52.9H13V51.5H12V50.7H11V49.9H10V50.0H9V50.4H8V50.4H7V50.2H6V49.6H5V50.1H4V49.8H3V49.6H2V49.8H1V50.1H0Z"/></svg>
<div id="cursor"></div>
<div id="caption"><b>Juan:</b>Magandang umaga sa lahat, simulan na natin ang Project Alpha update.</div>

<div class="tm" style="left:39px">00<i>:</i>00</div>
<div id="track"></div><div id="thumb"></div>
<div class="tm" style="left:1058px"><i style="transform:scaleX(1.700)">-</i>00<i>:</i>08</div>

<!-- controls -->
<svg class="abs" style="left:240px;top:391px" width="16" height="17" viewBox="0 0 16 17"><g fill="none" stroke="#2a2a2a" stroke-width="1.450" stroke-linecap="round" stroke-linejoin="round"><path d="M8 3.4A5.900 5.900 0 1 0 13.400 6.900"/><path d="M9.300 1L6.600 3.400 9.300 5.800"/></g><text x="8" y="11.500" text-anchor="middle" font-family="Liberation Sans,Arial,sans-serif" font-size="6.200" font-weight="700" fill="#2a2a2a">30</text></svg>
<svg class="abs" style="left:288px;top:391px" width="16" height="17" viewBox="0 0 16 17"><g fill="none" stroke="#2a2a2a" stroke-width="1.450" stroke-linecap="round" stroke-linejoin="round"><path d="M8 3.4A5.900 5.900 0 1 0 13.400 6.900"/><path d="M9.300 1L6.600 3.400 9.300 5.800"/></g><text x="8" y="11.500" text-anchor="middle" font-family="Liberation Sans,Arial,sans-serif" font-size="6.200" font-weight="700" fill="#2a2a2a">10</text></svg>
<svg class="abs" style="left:396px;top:391px" width="16" height="17" viewBox="0 0 16 17"><g transform="translate(16,0) scale(-1,1)" fill="none" stroke="#2a2a2a" stroke-width="1.450" stroke-linecap="round" stroke-linejoin="round"><path d="M8 3.4A5.900 5.900 0 1 0 13.400 6.900"/><path d="M9.300 1L6.600 3.400 9.300 5.800"/></g><text x="8" y="11.500" text-anchor="middle" font-family="Liberation Sans,Arial,sans-serif" font-size="6.200" font-weight="700" fill="#2a2a2a">10</text></svg>
<svg class="abs" style="left:444px;top:391px" width="16" height="17" viewBox="0 0 16 17"><g transform="translate(16,0) scale(-1,1)" fill="none" stroke="#2a2a2a" stroke-width="1.450" stroke-linecap="round" stroke-linejoin="round"><path d="M8 3.4A5.900 5.900 0 1 0 13.400 6.900"/><path d="M9.300 1L6.600 3.400 9.300 5.800"/></g><text x="8" y="11.500" text-anchor="middle" font-family="Liberation Sans,Arial,sans-serif" font-size="6.200" font-weight="700" fill="#2a2a2a">30</text></svg>
<svg class="abs" style="left:492px;top:393px" width="18" height="14" viewBox="0 0 18 14"><g fill="none" stroke="#2a2a2a" stroke-width="1.300" stroke-linejoin="round" stroke-linecap="round"><path d="M1 4.800h2.800L8 1.200v11.600L3.800 9.200H1z"/><path d="M11 4.300a3.600 3.600 0 0 1 0 5.400"/><path d="M13.600 2a6.600 6.600 0 0 1 0 10"/></g></svg>
<div id="play"><svg width="48" height="48" viewBox="0 0 48 48"><path d="M20.700 18.400v12.800l9.700-6.400z" fill="#303030" stroke="#303030" stroke-width=".8" stroke-linejoin="round"/></svg></div>
<div class="pill" style="left:530px;width:73px">1x <span style="font-size:8px;position:relative;top:-2px;left:1px">&#9660;</span></div>
<div id="mark"><svg width="11" height="12" viewBox="0 0 11 12" style="margin-right:5px"><path d="M1.200 0.800v10.700" stroke="#222" stroke-width="1.400"/><path d="M1.200 1.200h5.300l.4 1h3.600v5.600H6.800l-.4-1H1.200z" fill="#222"/></svg>Markahan</div>
<div class="pill" style="left:898px;width:210px">Mga Nakasaad na Kaganapan</div>

<div id="spk-label">Speakers</div>
<div id="spk1"></div><div id="spk2"></div>

<!-- summary header -->
<svg class="abs" style="left:47px;top:472px" width="10" height="10" viewBox="0 0 10 10"><rect x=".7" y=".7" width="8.600" height="8.600" rx=".9" fill="none" stroke="#333" stroke-width="1.300"/><path d="M3 7.500V6.300M5 7.500V4.600M7 7.500V3" stroke="#333" stroke-width="1.100"/></svg>
<div class="h" style="left:65px;top:470px;font-size:11px;line-height:14px">Buod ng AI</div>
<svg class="abs" style="left:1061px;top:472px" width="8" height="8" viewBox="0 0 8 8"><path d="M.6 7.400L7.400 .6M2.800 .6h4.600v4.600" fill="none" stroke="#333" stroke-width="1.100"/></svg>
<svg class="abs" style="left:1085px;top:471px" width="10" height="10" viewBox="0 0 10 10"><path d="M.6 9.400L9.400 .6M5.600 .6h3.800v3.800M.6 5.600v3.800h3.800" fill="none" stroke="#333" stroke-width="1.100"/></svg>

<div class="tab" style="left:60px;color:#4a9ba7">Transcript</div>
<div class="tab" style="left:141px">Buod</div>
<div class="tab" style="left:197px">Mga aksyon</div>
<div class="tab" style="left:290px">Mga desisyon</div>
<div class="tab" style="left:392px">Mga kabanata</div>
<div id="tabline"></div><div id="tabact"></div>
<div class="sbtn" style="left:943px;top:499px;width:38px">MD</div>
<div class="sbtn" style="left:981px;top:499px;width:41px">SRT</div>
<div class="sbtn" style="left:1022px;top:499px;width:50px">JSON</div>
<div class="sbtn" style="left:1072px;top:499px;width:28px"><svg width="10" height="10" viewBox="0 0 10 10" style="margin:4.500px auto 0"><path d="M8.300 5A3.300 3.300 0 1 1 6.800 2.200" fill="none" stroke="#999" stroke-width="1.200"/><path d="M5.800 0.600L9 1.200 7.600 4z" fill="#999"/></svg></div>
<div class="sbtn" style="left:1010px;top:538px;width:82px;padding-left:14px"><svg class="abs" style="left:9px;top:4px" width="10" height="12" viewBox="0 0 10 12"><rect x="3" y="0.500" width="6.500" height="8.500" rx="1" fill="#999"/><path d="M1 3v8h6" fill="none" stroke="#999" stroke-width="1.200"/></svg>Kopyahin</div>

<div id="spk-table">
  <div class="hd">MGA NAGSASALITA</div>
  <div class="row"><span class="dot" style="background:#6a5be2"></span><span class="nm">Juan</span><div class="sel">Pagsama sa…<svg width="10" height="7" viewBox="0 0 10 7"><path d="M1 1l4 4 4-4" fill="none" stroke="#555" stroke-width="1.050"/></svg></div></div>
  <div class="row"><span class="dot" style="background:#3f8a45"></span><span class="nm">Maria</span><div class="sel">Pagsama sa…<svg width="10" height="7" viewBox="0 0 10 7"><path d="M1 1l4 4 4-4" fill="none" stroke="#999" stroke-width="1.200"/></svg></div></div>
  <div class="row"><span class="dot" style="background:#d2404a"></span><span class="nm">Jose</span><div class="sel">Pagsama sa…<svg width="10" height="7" viewBox="0 0 10 7"><path d="M1 1l4 4 4-4" fill="none" stroke="#555" stroke-width="1.050"/></svg></div></div>
</div>

<div class="chip" style="top:711px;width:39.400px;border-color:#7a6ce6;color:#6a5be2">Juan</div>
<div class="ts" style="left:106px;top:712px">00:00</div>
<div class="tx" style="top:732px">Magandang umaga sa lahat, simulan na natin ang Project Alpha update.</div>
<div class="chip" style="top:762px;width:42.300px;border-color:#4a9150;color:#3f8a45">Maria</div>
<div class="ts" style="left:109px;top:763px">00:05</div>
<div class="tx" style="top:783px">Salamat Juan. Tungkol sa timeline, nagkaroon ng problema sa frontend integration, kaya mag-a-delay ng dalawang linggo ang beta release.</div>
<div class="chip" style="top:813px;width:39px;border-color:#dc5660;color:#d2404a">Jose</div>
<div class="ts" style="left:105px;top:814px">00:15</div>
<div class="tx" style="top:834px">Sa technical side, mas mataas ang API latency kaysa sa inaasahan. Kailangan nating mag-scale ng instances, na makakaapekto sa monthly budget ng mga sampung porsyento.</div>
<div class="chip" style="top:864px;width:39.400px;border-color:#7a6ce6;color:#6a5be2">Juan</div>
<div class="ts" style="left:106px;top:865px">00:25</div>
<div class="tx" style="top:885px">Naiintindihan. Aprubahan natin ang budget increase at i-target ang bagong petsa. Tapos na ang meeting.</div>

<!-- right panel -->
<svg class="abs" style="left:1122px;top:189.500px" width="12" height="11" viewBox="0 0 12 11"><rect x="2.400" y="2" width="7.200" height="7.400" rx="1.200" fill="none" stroke="#333" stroke-width="1.500"/><path d="M5 1.800l1-1.600 1 1.600zM2 3.900L.1 5.700 2 7.500zM10 3.900l1.900 1.800L10 7.500z" fill="#333"/><circle cx="4.700" cy="4.900" r=".75" fill="#333"/><circle cx="7.300" cy="4.900" r=".75" fill="#333"/><path d="M4.200 7.100h3.600" stroke="#333" stroke-width="1"/></svg>
<div class="h" style="left:1140.700px;top:188px;font-size:11px;line-height:14px">Ahente ng AI at Katrabaho</div>
<svg class="abs" style="left:1835px;top:189px" width="10" height="10" viewBox="0 0 10 10"><path d="M9 1L1 9M1 3.500V9h5.500" fill="none" stroke="#333" stroke-width="1.200"/></svg>
<svg class="abs" style="left:1858px;top:188px" width="12" height="12" viewBox="0 0 12 12"><path d="M1 11L11 1M6.500 1H11v4.500M1 6.500V11h4.500" fill="none" stroke="#333" stroke-width="1.200"/></svg>

<div id="agent">
  <svg class="abs" style="left:15px;top:15px" width="13" height="11" viewBox="0 0 13 11"><path d="M5.500 1.600l1-1.500 1 1.500zM2.300 4L.1 6l2.200 2zM10.700 4l2.200 2-2.200 2z" fill="#2a2a2a"/><rect x="2" y="1.400" width="9" height="9.400" rx="1.600" fill="#2a2a2a"/><circle cx="4.800" cy="5" r="1.050" fill="#fff"/><circle cx="8.200" cy="5" r="1.050" fill="#fff"/><rect x="4.200" y="7.400" width="4.600" height="1.300" fill="#fff"/></svg>
  <div class="h" style="left:37px;top:13px;font-size:13px;line-height:18px">Konteksto: Demo_Transcription_fil_20260330090003.webm</div>
  <div class="abs" style="left:721px;top:10px;width:34px;height:22px;border:1px solid #c4d3f5;border-radius:6px;background:#f5f8ff"><svg class="abs" style="left:12px;top:6px" width="9" height="9" viewBox="0 0 9 9"><path d="M4.500 .5v8M.5 4.500h8" stroke="#aaa" stroke-width="1.100"/></svg></div>
  <div class="hl" style="top:42px"></div>
  <div class="abs" style="left:0;top:43px;width:769px;height:34px;background:#f5f8ff"></div>
  <div class="abs" style="left:10px;top:53px;font-size:11px;line-height:14px;color:#999">Mga session</div>
  <div class="abs" style="left:78px;top:50px;width:328px;height:21px;border:1px solid #c4d3f5;border-radius:5px;background:#f5f8ff;font-size:12px;line-height:19px;color:#2a2a2a;padding-left:9px;white-space:nowrap">Wala pang session. Magsimula ng pag-uusap sa ibaba.<svg class="abs" style="left:309px;top:7px" width="7" height="5" viewBox="0 0 7 5"><path d="M.8 1l2.700 2.700L6.200 1" fill="none" stroke="#999" stroke-width="1"/></svg></div>
  <div class="abs" style="left:647px;top:50px;width:112px;height:21px;border:1.500px solid #4a9ba7;border-radius:6px;background:#f5f8ff;font-size:11px;line-height:18px;color:#4a9ba7;padding-left:24px;white-space:nowrap"><svg class="abs" style="left:9px;top:5px" width="8" height="8" viewBox="0 0 8 8"><path d="M4 .3v7.400M.3 4h7.400" stroke="#4a9ba7" stroke-width="1.100"/></svg>Bagong session</div>
  <div class="hl" style="top:77px"></div>

  <svg class="abs" style="left:368.200px;top:337.800px" width="33.600" height="33.600" viewBox="0 0 24 24"><path d="M12.00 4.30L14.82 9.02L20.18 10.24L16.57 14.38L17.05 19.86L12.00 17.70L6.95 19.86L7.43 14.38L3.82 10.24L9.18 9.02Z" fill="#b9d8dd" stroke="#b9d8dd" stroke-width="5.200" stroke-linejoin="round"/><circle cx="9.150" cy="11.100" r="1.550" fill="#fff"/><circle cx="14.600" cy="11.100" r="1.550" fill="#fff"/><path d="M8.300 14.050h7.400c0 2-1.700 3.200-3.700 3.200s-3.700-1.200-3.700-3.200z" fill="#fff"/></svg>
  <div class="h" style="left:0;top:385px;width:769px;text-align:center;font-size:14px;line-height:18px">Ahente ng AI</div>
  <div class="abs" style="left:0;top:415px;width:769px;text-align:center;font-size:11.800px;line-height:16px;color:#999">Mga utos: /new · /clear · /cost · /help</div>

  <div class="hl" style="top:703px"></div>
  <div class="rc" style="left:13px;top:712px;width:166px"><svg width="9" height="10" viewBox="0 0 9 10"><path d="M1 0h5l3 3v7H0V1z" fill="#999"/><path d="M2 5h5M2 7h5" stroke="#fff" stroke-width=".8"/></svg>Ibuod ang recording na ito</div>
  <div class="rc" style="left:185px;top:712px;width:206px"><svg width="10" height="10" viewBox="0 0 10 10"><circle cx="5" cy="5" r="4.200" fill="none" stroke="#999" stroke-width="1.100"/><path d="M3 5.200l1.500 1.500L7.300 3.600" fill="none" stroke="#999" stroke-width="1.100"/></svg>Maghanap ng mga item ng aksyon</div>
  <div class="rc" style="left:397px;top:712px;width:154px"><svg width="11" height="8" viewBox="0 0 11 8"><rect width="11" height="8" rx="1" fill="#999"/><path d="M.8 1l4.700 3.400L10.200 1" fill="none" stroke="#fff" stroke-width=".9"/></svg>Draft follow-up na email</div>
  <div class="hl" style="top:743px"></div>

  <div class="mp" style="left:11px;width:69px;padding-right:17px">Claude<svg class="abs" style="left:49px;top:7px" width="7" height="5" viewBox="0 0 7 5"><path d="M.8 1l2.700 2.700L6.200 1" fill="none" stroke="#999" stroke-width="1"/></svg></div>
  <div class="abs" style="left:88px;top:750px;width:177px;height:23px;border-radius:7px;background:#f1f5fe"></div>
  <div class="abs" style="left:90px;top:752px;width:75px;height:19px;border-radius:5px;background:#fff;box-shadow:0 1px 2px rgba(0,0,0,.12);font-size:11px;line-height:19px;text-align:center;color:#2a2a2a">Magtanong</div>
  <div class="abs" style="left:176px;top:752px;font-size:11px;line-height:19px;color:#999">Code</div>
  <div class="abs" style="left:225px;top:752px;font-size:11px;line-height:19px;color:#999">Plano</div>
  <div class="mp" style="left:439px;width:103px;background:#4a9ba7;border-color:#4a9ba7;color:#fff">Claude Haiku 4.5</div>
  <div class="mp" style="left:546px;width:109px">Claude Sonnet 4.6</div>
  <div class="mp" style="left:659px;width:100px">Claude Opus 4.6</div>
  <div class="hl" style="top:778px"></div>

  <div class="abs" style="left:11px;top:787px;width:704px;height:36px;border:1px solid #c4d3f5;border-radius:8px;background:#fff;font-size:13px;line-height:34px;color:#999;padding-left:10px;white-space:nowrap">Magtanong ng kahit ano... (Enter para ipadala, Shift+Enter para sa bagong linya)</div>
  <div class="abs" style="left:723px;top:787px;width:36px;height:36px;border-radius:8px;background:linear-gradient(135deg,#c3d6f8,#cdd2f8)"><svg class="abs" style="left:11px;top:11px" width="15" height="13" viewBox="0 0 15 13"><path d="M.5 .6L14.3 6.5 .5 12.4z" fill="#fff"/><path d="M.5 6.500h5.500" stroke="#c9d6f8" stroke-width="1.500"/></svg></div>
</div>
</div>
</body>
</html>
